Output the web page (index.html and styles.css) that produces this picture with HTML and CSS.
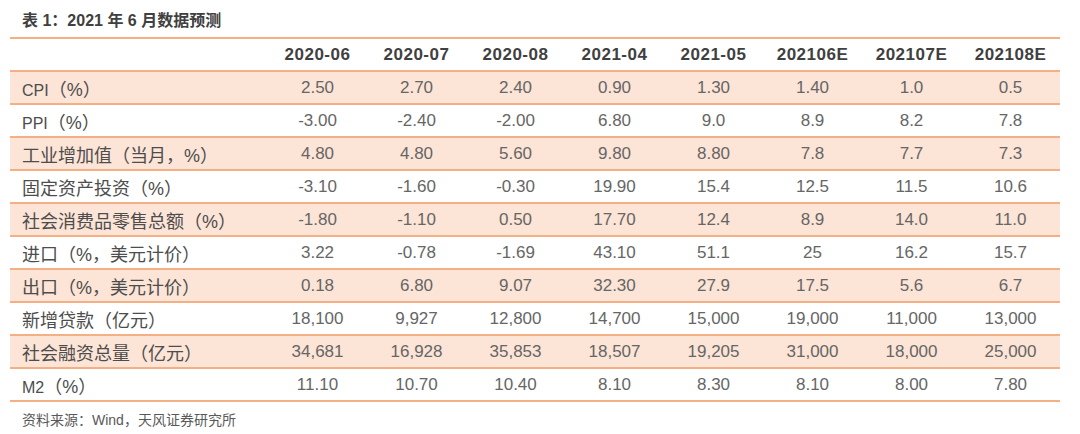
FILE: index.html
```html
<!DOCTYPE html>
<html lang="zh-CN">
<head>
<meta charset="utf-8">
<title>表1：2021年6月数据预测</title>
<link rel="stylesheet" href="styles.css">
</head>
<body>
<div class="page">
  <div class="title">表 1：2021 年 6 月数据预测</div>
  <table class="data">
    <colgroup>
      <col class="c-label">
      <col class="c-num"><col class="c-num"><col class="c-num"><col class="c-num">
      <col class="c-num"><col class="c-num"><col class="c-num"><col class="c-num">
    </colgroup>
    <thead>
      <tr>
        <th class="label"></th>
        <th>2020-06</th><th>2020-07</th><th>2020-08</th><th>2021-04</th>
        <th>2021-05</th><th>202106E</th><th>202107E</th><th>202108E</th>
      </tr>
    </thead>
    <tbody>
      <tr class="shade"><td class="label"><span class="latin">CPI</span>（%）</td><td>2.50</td><td>2.70</td><td>2.40</td><td>0.90</td><td>1.30</td><td>1.40</td><td>1.0</td><td>0.5</td></tr>
      <tr><td class="label"><span class="latin">PPI</span>（%）</td><td>-3.00</td><td>-2.40</td><td>-2.00</td><td>6.80</td><td>9.0</td><td>8.9</td><td>8.2</td><td>7.8</td></tr>
      <tr class="shade"><td class="label">工业增加值（当月，%）</td><td>4.80</td><td>4.80</td><td>5.60</td><td>9.80</td><td>8.80</td><td>7.8</td><td>7.7</td><td>7.3</td></tr>
      <tr><td class="label">固定资产投资（%）</td><td>-3.10</td><td>-1.60</td><td>-0.30</td><td>19.90</td><td>15.4</td><td>12.5</td><td>11.5</td><td>10.6</td></tr>
      <tr class="shade"><td class="label">社会消费品零售总额（%）</td><td>-1.80</td><td>-1.10</td><td>0.50</td><td>17.70</td><td>12.4</td><td>8.9</td><td>14.0</td><td>11.0</td></tr>
      <tr><td class="label">进口（%，美元计价）</td><td>3.22</td><td>-0.78</td><td>-1.69</td><td>43.10</td><td>51.1</td><td>25</td><td>16.2</td><td>15.7</td></tr>
      <tr class="shade"><td class="label">出口（%，美元计价）</td><td>0.18</td><td>6.80</td><td>9.07</td><td>32.30</td><td>27.9</td><td>17.5</td><td>5.6</td><td>6.7</td></tr>
      <tr><td class="label">新增贷款（亿元）</td><td>18,100</td><td>9,927</td><td>12,800</td><td>14,700</td><td>15,000</td><td>19,000</td><td>11,000</td><td>13,000</td></tr>
      <tr class="shade"><td class="label">社会融资总量（亿元）</td><td>34,681</td><td>16,928</td><td>35,853</td><td>18,507</td><td>19,205</td><td>31,000</td><td>18,000</td><td>25,000</td></tr>
      <tr><td class="label"><span class="latin">M2</span>（%）</td><td>11.10</td><td>10.70</td><td>10.40</td><td>8.10</td><td>8.30</td><td>8.10</td><td>8.00</td><td>7.80</td></tr>
    </tbody>
  </table>
  <div class="source">资料来源：Wind，天风证券研究所</div>
</div>
</body>
</html>
```

FILE: styles.css
```css
html, body {
  margin: 0;
  padding: 0;
  background: #ffffff;
}

body {
  font-family: "Liberation Sans", "Noto Sans CJK SC", sans-serif;
  color: #595959;
}

.page {
  width: 1050px;
  padding: 11px 0 0 10px;
}

.title {
  font-size: 16px;
  line-height: 20px;
  font-weight: bold;
  color: #404040;
  padding-left: 12px;
  margin-bottom: 6px;
}

.data {
  width: 1050px;
  border-collapse: separate;
  border-spacing: 0;
  table-layout: fixed;
  border-top: 2px solid #f4b084;
}

.c-label { width: 258px; }
.c-num { width: 99px; }

.data th,
.data td {
  height: 31px;
  padding: 0;
  border-bottom: 2px solid #f4b084;
  text-align: center;
  vertical-align: middle;
  white-space: nowrap;
}

.data th {
  font-size: 17px;
  font-weight: bold;
  color: #404040;
  letter-spacing: 0.5px;
}

.data td {
  font-size: 17px;
  color: #666666;
}

.data td.label {
  text-align: left;
  padding-left: 12px;
  font-size: 18px;
  color: #4d4d4d;
}

.data td.label .latin {
  font-size: 16px;
}

.data tr.shade td {
  background: #fce4d6;
}

.source {
  font-size: 14px;
  line-height: 18px;
  color: #595959;
  padding-left: 12px;
  margin-top: 9px;
}
```
